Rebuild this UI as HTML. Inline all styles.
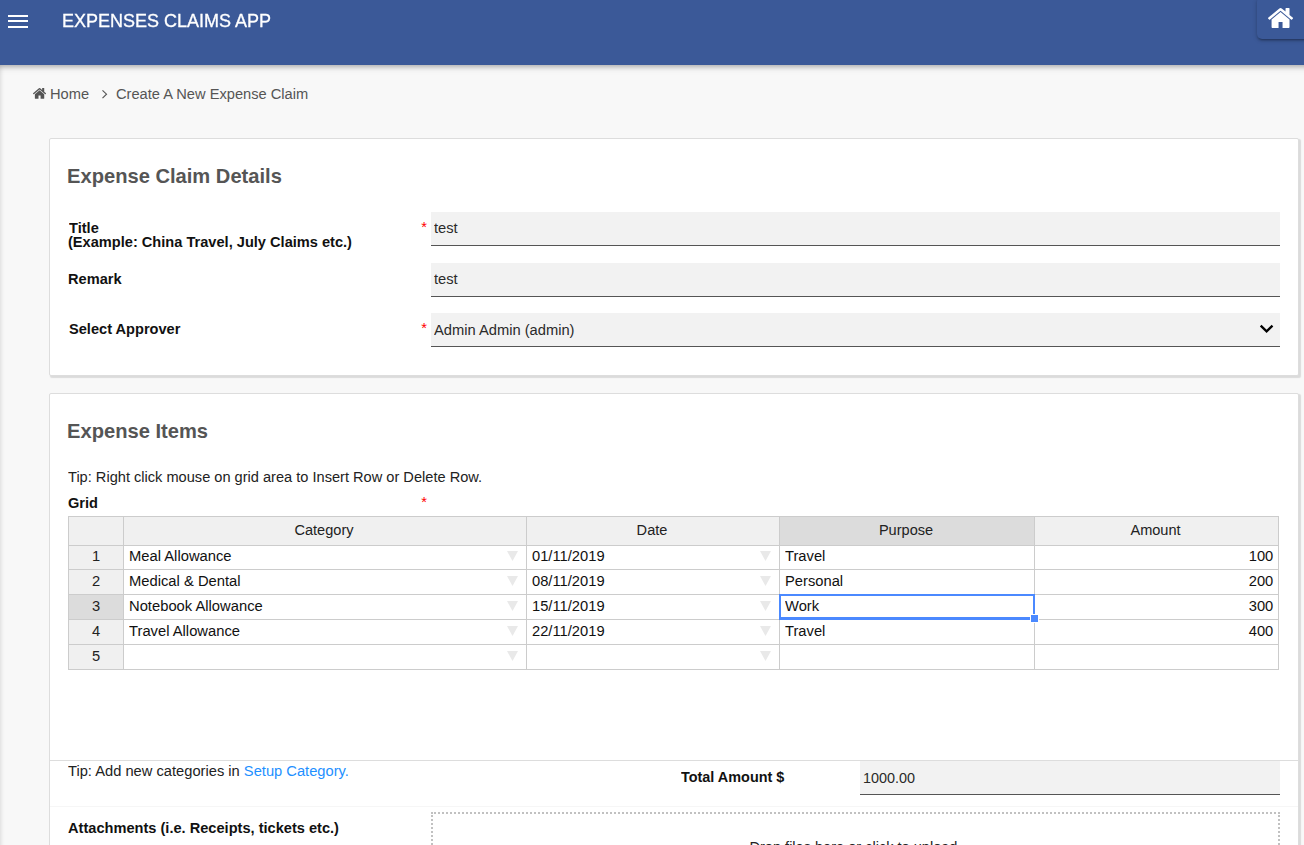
<!DOCTYPE html>
<html lang="en">
<head>
<meta charset="utf-8">
<title>Expenses Claims App</title>
<style>
html,body{margin:0;padding:0}
body{width:1304px;height:845px;overflow:hidden;position:relative;background:#f8f8f8;font-family:"Liberation Sans",Arial,sans-serif}
.b{position:absolute;display:block}
.g{position:absolute;left:0;top:0;width:0;height:0;margin:0;padding:0}
.t{position:absolute;display:block;white-space:nowrap;margin:0;padding:0;line-height:24px;font-weight:400;text-decoration:none}
</style>
</head>
<body>
<div class="b" style="left:-20px;top:66px;width:20px;height:800px;box-shadow:0 0 5px rgba(0,0,0,.17)"></div>
<div class="g" id="topbar">
<header class="b" style="left:-10px;top:0;width:1324px;height:65px;background:#3b5998;box-shadow:0 2px 5px 0 rgba(0,0,0,.27),0 2px 10px 0 rgba(0,0,0,.06)"></header>
<div class="b" style="left:8px;top:15px;width:20px;height:2px;background:#fff"></div>
<div class="b" style="left:8px;top:20px;width:20px;height:2px;background:#fff"></div>
<div class="b" style="left:8px;top:26px;width:20px;height:2px;background:#fff"></div>
<h1 class="t" style="left:62px;top:9px;font-size:18px;color:#fff;will-change:transform;-webkit-text-stroke:0.3px #fff;">EXPENSES CLAIMS APP</h1>
<div class="b" style="left:1256.5px;top:-3px;width:60px;height:42px;border-radius:5px;box-shadow:0 2px 2px 0 rgba(0,0,0,.14),0 3px 1px -2px rgba(0,0,0,.12),0 1px 5px 0 rgba(0,0,0,.2)"></div>
<svg class="b" style="left:1267.9px;top:8.05px" width="25.1" height="20" viewBox="89.9 253 1612.2 1283" preserveAspectRatio="none"><path fill="#fff" d="M1472 992v480q0 26-19 45t-45 19h-384v-384h-256v384h-384q-26 0-45-19t-19-45v-480q0-1 .5-3t.5-3l575-474 575 474q1 2 1 6zm223-69l-62 74q-8 9-21 11h-3q-13 0-21-7l-692-577-692 577q-12 8-24 7-13-2-21-11l-62-74q-8-10-7-23.500t11-21.500l719-599q32-26 76-26t76 26l244 204v-195q0-14 9-23t23-9h192q14 0 23 9t9 23v408l219 182q10 8 11 21.500t-7 23.500z"/></svg>
</div>
<nav class="g" id="breadcrumb">
<svg class="b" style="left:32.9px;top:88px" width="13.1" height="10.8" viewBox="89.9 253 1612.2 1283" preserveAspectRatio="none"><path fill="#555" d="M1472 992v480q0 26-19 45t-45 19h-384v-384h-256v384h-384q-26 0-45-19t-19-45v-480q0-1 .5-3t.5-3l575-474 575 474q1 2 1 6zm223-69l-62 74q-8 9-21 11h-3q-13 0-21-7l-692-577-692 577q-12 8-24 7-13-2-21-11l-62-74q-8-10-7-23.500t11-21.500l719-599q32-26 76-26t76 26l244 204v-195q0-14 9-23t23-9h192q14 0 23 9t9 23v408l219 182q10 8 11 21.500t-7 23.500z"/></svg>
<a class="t" style="left:50.2px;top:82px;font-size:15.36px;color:#555;transform:scaleX(0.9538);transform-origin:0 0;">Home</a>
<svg class="b" style="left:100px;top:88px" width="8" height="12" viewBox="0 0 8 12"><path d="M2.5 2.3 L6.5 6.2 L2.5 10.1" fill="none" stroke="#555" stroke-width="1.15"/></svg>
<span class="t" style="left:115.7px;top:82px;font-size:15.36px;color:#555;transform:scaleX(0.9538);transform-origin:0 0;">Create A New Expense Claim</span>
</nav>
<main class="g">
<section class="g" id="claim-details">
<div class="b" style="left:49px;top:138px;width:1250px;height:238px;background:#fff;border:1px solid #ddd;border-radius:2px;box-shadow:1.5px 1.5px 1px #dbdbdb;box-sizing:border-box;"></div>
<h2 class="t" style="left:66.7px;top:164px;font-size:20.95px;color:#555;font-weight:700;transform:scaleX(0.9618);transform-origin:0 0;">Expense Claim Details</h2>
<label class="t" style="left:68.5px;top:216px;font-size:15.36px;color:#111;font-weight:700;transform:scaleX(0.9505);transform-origin:0 0;">Title</label>
<label class="t" style="left:68px;top:230px;font-size:15.36px;color:#111;font-weight:700;transform:scaleX(0.9505);transform-origin:0 0;">(Example: China Travel, July Claims etc.)</label>
<label class="t" style="left:68px;top:267px;font-size:15.36px;color:#111;font-weight:700;transform:scaleX(0.9505);transform-origin:0 0;">Remark</label>
<label class="t" style="left:69px;top:317px;font-size:15.36px;color:#111;font-weight:700;transform:scaleX(0.9505);transform-origin:0 0;">Select Approver</label>
<div class="b" style="left:431px;top:212px;width:849px;height:34px;background:#f2f2f2;border-bottom:1px solid #555;box-sizing:border-box;"></div>
<div class="b" style="left:431px;top:263px;width:849px;height:34px;background:#f2f2f2;border-bottom:1px solid #555;box-sizing:border-box;"></div>
<div class="b" style="left:431px;top:313px;width:849px;height:34px;background:#f2f2f2;border-bottom:1px solid #555;box-sizing:border-box;"></div>
<div class="t" style="left:434px;top:216px;font-size:15.36px;color:#2a2a2a;transform:scaleX(0.957);transform-origin:0 0;">test</div>
<div class="t" style="left:434px;top:267px;font-size:15.36px;color:#2a2a2a;transform:scaleX(0.957);transform-origin:0 0;">test</div>
<div class="t" style="left:434px;top:318px;font-size:15.36px;color:#2a2a2a;transform:scaleX(0.957);transform-origin:0 0;">Admin Admin (admin)</div>
<div class="t" style="left:421.2px;top:215px;font-size:14.67px;color:#f00">*</div>
<div class="t" style="left:421.2px;top:316px;font-size:14.67px;color:#f00">*</div>
<svg class="b" style="left:1258px;top:322px" width="18" height="14" viewBox="0 0 18 14"><path d="M2.7 3.6 L8.6 9.4 L14.5 3.6" fill="none" stroke="#000" stroke-width="2.3"/></svg>
</section>
<section class="g" id="expense-items">
<div class="b" style="left:49px;top:393px;width:1250px;height:470px;background:#fff;border:1px solid #ddd;border-radius:2px;box-shadow:1.5px 1.5px 1px #dbdbdb;box-sizing:border-box;"></div>
<h2 class="t" style="left:67px;top:419px;font-size:20.95px;color:#555;font-weight:700;transform:scaleX(0.9618);transform-origin:0 0;">Expense Items</h2>
<p class="t" style="left:68px;top:465px;font-size:15.36px;color:#222;transform:scaleX(0.9505);transform-origin:0 0;">Tip: Right click mouse on grid area to Insert Row or Delete Row.</p>
<label class="t" style="left:68px;top:491px;font-size:15.36px;color:#111;font-weight:700;transform:scaleX(0.9505);transform-origin:0 0;">Grid</label>
<div class="t" style="left:421.2px;top:490px;font-size:14.67px;color:#f00">*</div>
<div class="g" id="grid">
<div class="b" style="left:68px;top:516px;width:1211px;height:30px;background:#f0f0f0"></div>
<div class="b" style="left:68px;top:545px;width:56px;height:125px;background:#f0f0f0"></div>
<div class="b" style="left:779px;top:516px;width:256px;height:30px;background:#dcdcdc"></div>
<div class="b" style="left:68px;top:594px;width:56px;height:26px;background:#dcdcdc"></div>
<div class="b" style="left:68px;top:516px;width:1211px;height:1px;background:#ccc"></div>
<div class="b" style="left:68px;top:545px;width:1211px;height:1px;background:#ccc"></div>
<div class="b" style="left:68px;top:569px;width:1211px;height:1px;background:#ccc"></div>
<div class="b" style="left:68px;top:594px;width:1211px;height:1px;background:#ccc"></div>
<div class="b" style="left:68px;top:619px;width:1211px;height:1px;background:#ccc"></div>
<div class="b" style="left:68px;top:644px;width:1211px;height:1px;background:#ccc"></div>
<div class="b" style="left:68px;top:669px;width:1211px;height:1px;background:#ccc"></div>
<div class="b" style="left:68px;top:516px;width:1px;height:154px;background:#ccc"></div>
<div class="b" style="left:123px;top:516px;width:1px;height:154px;background:#ccc"></div>
<div class="b" style="left:526px;top:516px;width:1px;height:154px;background:#ccc"></div>
<div class="b" style="left:779px;top:516px;width:1px;height:154px;background:#ccc"></div>
<div class="b" style="left:1034px;top:516px;width:1px;height:154px;background:#ccc"></div>
<div class="b" style="left:1278px;top:516px;width:1px;height:154px;background:#ccc"></div>
<div class="t" style="left:123.3px;top:518px;font-size:15.36px;color:#222;width:402px;text-align:center;transform:scaleX(0.9473);transform-origin:50% 0;">Category</div>
<div class="t" style="left:526.3px;top:518px;font-size:15.36px;color:#222;width:252px;text-align:center;transform:scaleX(0.9473);transform-origin:50% 0;">Date</div>
<div class="t" style="left:779.3px;top:518px;font-size:15.36px;color:#222;width:254px;text-align:center;transform:scaleX(0.9473);transform-origin:50% 0;">Purpose</div>
<div class="t" style="left:1034.3px;top:518px;font-size:15.36px;color:#222;width:243px;text-align:center;transform:scaleX(0.9473);transform-origin:50% 0;">Amount</div>
<div class="t" style="left:69px;top:544px;font-size:15.36px;color:#222;width:54px;text-align:center;transform:scaleX(0.957);transform-origin:50% 0;">1</div>
<div class="t" style="left:128.5px;top:544px;font-size:15.36px;color:#111;transform:scaleX(0.9609);transform-origin:0 0;">Meal Allowance</div>
<div class="t" style="left:531.5px;top:544px;font-size:15.36px;color:#111;transform:scaleX(0.9583);transform-origin:0 0;">01/11/2019</div>
<div class="t" style="left:784.5px;top:544px;font-size:15.36px;color:#111;transform:scaleX(0.9583);transform-origin:0 0;">Travel</div>
<div class="t" style="left:1035px;top:544px;font-size:15.36px;color:#111;width:238.3px;text-align:right;transform:scaleX(0.957);transform-origin:100% 0;">100</div>
<svg class="b" style="left:507px;top:551px" width="11" height="10" viewBox="0 0 11 10"><path d="M0 0H11L5.5 10Z" fill="#e9e9e9"/></svg>
<svg class="b" style="left:760px;top:551px" width="11" height="10" viewBox="0 0 11 10"><path d="M0 0H11L5.5 10Z" fill="#e9e9e9"/></svg>
<div class="t" style="left:69px;top:569px;font-size:15.36px;color:#222;width:54px;text-align:center;transform:scaleX(0.957);transform-origin:50% 0;">2</div>
<div class="t" style="left:128.5px;top:569px;font-size:15.36px;color:#111;transform:scaleX(0.9609);transform-origin:0 0;">Medical &amp; Dental</div>
<div class="t" style="left:531.5px;top:569px;font-size:15.36px;color:#111;transform:scaleX(0.9583);transform-origin:0 0;">08/11/2019</div>
<div class="t" style="left:784.5px;top:569px;font-size:15.36px;color:#111;transform:scaleX(0.9583);transform-origin:0 0;">Personal</div>
<div class="t" style="left:1035px;top:569px;font-size:15.36px;color:#111;width:238.3px;text-align:right;transform:scaleX(0.957);transform-origin:100% 0;">200</div>
<svg class="b" style="left:507px;top:576px" width="11" height="10" viewBox="0 0 11 10"><path d="M0 0H11L5.5 10Z" fill="#e9e9e9"/></svg>
<svg class="b" style="left:760px;top:576px" width="11" height="10" viewBox="0 0 11 10"><path d="M0 0H11L5.5 10Z" fill="#e9e9e9"/></svg>
<div class="t" style="left:69px;top:594px;font-size:15.36px;color:#222;width:54px;text-align:center;transform:scaleX(0.957);transform-origin:50% 0;">3</div>
<div class="t" style="left:128.5px;top:594px;font-size:15.36px;color:#111;transform:scaleX(0.9609);transform-origin:0 0;">Notebook Allowance</div>
<div class="t" style="left:531.5px;top:594px;font-size:15.36px;color:#111;transform:scaleX(0.9583);transform-origin:0 0;">15/11/2019</div>
<div class="t" style="left:784.5px;top:594px;font-size:15.36px;color:#111;transform:scaleX(0.9583);transform-origin:0 0;">Work</div>
<div class="t" style="left:1035px;top:594px;font-size:15.36px;color:#111;width:238.3px;text-align:right;transform:scaleX(0.957);transform-origin:100% 0;">300</div>
<svg class="b" style="left:507px;top:601px" width="11" height="10" viewBox="0 0 11 10"><path d="M0 0H11L5.5 10Z" fill="#e9e9e9"/></svg>
<svg class="b" style="left:760px;top:601px" width="11" height="10" viewBox="0 0 11 10"><path d="M0 0H11L5.5 10Z" fill="#e9e9e9"/></svg>
<div class="t" style="left:69px;top:619px;font-size:15.36px;color:#222;width:54px;text-align:center;transform:scaleX(0.957);transform-origin:50% 0;">4</div>
<div class="t" style="left:128.5px;top:619px;font-size:15.36px;color:#111;transform:scaleX(0.9609);transform-origin:0 0;">Travel Allowance</div>
<div class="t" style="left:531.5px;top:619px;font-size:15.36px;color:#111;transform:scaleX(0.9583);transform-origin:0 0;">22/11/2019</div>
<div class="t" style="left:784.5px;top:619px;font-size:15.36px;color:#111;transform:scaleX(0.9583);transform-origin:0 0;">Travel</div>
<div class="t" style="left:1035px;top:619px;font-size:15.36px;color:#111;width:238.3px;text-align:right;transform:scaleX(0.957);transform-origin:100% 0;">400</div>
<svg class="b" style="left:507px;top:626px" width="11" height="10" viewBox="0 0 11 10"><path d="M0 0H11L5.5 10Z" fill="#e9e9e9"/></svg>
<svg class="b" style="left:760px;top:626px" width="11" height="10" viewBox="0 0 11 10"><path d="M0 0H11L5.5 10Z" fill="#e9e9e9"/></svg>
<div class="t" style="left:69px;top:644px;font-size:15.36px;color:#222;width:54px;text-align:center;transform:scaleX(0.957);transform-origin:50% 0;">5</div>
<svg class="b" style="left:507px;top:651px" width="11" height="10" viewBox="0 0 11 10"><path d="M0 0H11L5.5 10Z" fill="#e9e9e9"/></svg>
<svg class="b" style="left:760px;top:651px" width="11" height="10" viewBox="0 0 11 10"><path d="M0 0H11L5.5 10Z" fill="#e9e9e9"/></svg>
<div class="b" style="left:779px;top:594px;width:256px;height:2px;background:#4b89ff"></div>
<div class="b" style="left:779px;top:594px;width:2px;height:26px;background:#4b89ff"></div>
<div class="b" style="left:1033px;top:594px;width:2px;height:20px;background:#4b89ff"></div>
<div class="b" style="left:779px;top:617px;width:251px;height:3px;background:#4b89ff"></div>
<div class="b" style="left:1030px;top:614px;width:9px;height:9px;background:#fff"></div>
<div class="b" style="left:1031px;top:615px;width:7px;height:7px;background:#4b89ff"></div>
</div>
<div class="b" style="left:50px;top:760px;width:1248px;height:1px;background:#ddd"></div>
<div class="b" style="left:50px;top:806px;width:1248px;height:1px;background:#f6f6f6"></div>
<div class="t" style="left:68px;top:759px;font-size:15.36px;color:#222;transform:scaleX(0.9564);transform-origin:0 0;">Tip: Add new categories in <a style="color:#1e90ff">Setup Category.</a></div>
<label class="t" style="left:681.1px;top:765px;font-size:15.36px;color:#111;font-weight:700;transform:scaleX(0.9388);transform-origin:0 0;">Total Amount $</label>
<div class="b" style="left:860px;top:761px;width:420px;height:34px;background:#f2f2f2;border-bottom:1px solid #555;box-sizing:border-box;"></div>
<div class="t" style="left:862.8px;top:766px;font-size:15.36px;color:#2a2a2a;transform:scaleX(0.9388);transform-origin:0 0;">1000.00</div>
<label class="t" style="left:68px;top:816px;font-size:15.36px;color:#111;font-weight:700;transform:scaleX(0.9505);transform-origin:0 0;">Attachments (i.e. Receipts, tickets etc.)</label>
<div class="b" style="left:431px;top:812px;width:849px;height:60px;border:2px dotted #c1c1c1;box-sizing:border-box;"></div>
<p class="t" style="left:432.4px;top:835px;font-size:15.36px;color:#222;width:847px;text-align:center;transform:scaleX(0.9479);transform-origin:50% 0;">Drop files here or click to upload.</p>
</section>
</main>
</body>
</html>
